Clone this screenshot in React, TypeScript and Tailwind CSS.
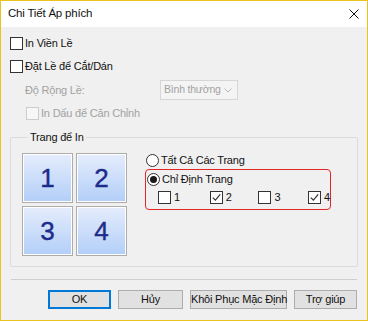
import React from 'react';

function CheckBox({ checked = false, disabled = false }: { checked?: boolean; disabled?: boolean }) {
  return (
    <span
      className={`w-[13px] h-[13px] shrink-0 border flex items-center justify-center ${
        disabled ? 'border-[#cccccc] bg-[#f7f7f7]' : 'border-[#333333] bg-white'
      }`}
    >
      {checked && (
        <svg width="9" height="9" viewBox="0 0 9 9">
          <path d="M0.8 4.6 L3.4 7.2 L8.2 1.4" fill="none" stroke="#333333" strokeWidth="1.2" />
        </svg>
      )}
    </span>
  );
}

function Radio({ checked = false }: { checked?: boolean }) {
  return (
    <span className="w-[13px] h-[13px] shrink-0 rounded-full border border-[#333333] bg-white flex items-center justify-center">
      {checked && <span className="w-[7px] h-[7px] rounded-full bg-[#1a1a1a]" />}
    </span>
  );
}

function Tile({ n }: { n: number }) {
  return (
    <div className="w-[51px] h-[50px] border border-[#acacac] p-px bg-white">
      <div className="w-full h-full bg-gradient-to-b from-[#e4ecfc] to-[#b3cff8] flex items-center justify-center">
        <span className="text-[26px] leading-none text-[#1d2c8a] [-webkit-text-stroke:0.4px_#1d2c8a]">{n}</span>
      </div>
    </div>
  );
}

function Btn({ label, primary = false, w }: { label: string; primary?: boolean; w: string }) {
  return (
    <button
      className={`h-[19px] ${w} bg-[#e1e1e1] text-[11px] leading-none text-[#111] whitespace-nowrap ${
        primary ? 'border-2 border-[#0078d7]' : 'border border-[#adadad]'
      }`}
    >
      {label}
    </button>
  );
}

export default function App() {
  return (
    <div
      className="w-[368px] h-[321px] border border-[#eac31e] bg-[#f0f0f0] flex flex-col text-[11px] tracking-[-0.2px] text-[#111] select-none whitespace-nowrap"
      style={{ fontFamily: '"Liberation Sans", Arial, sans-serif' }}
    >
      {/* title bar */}
      <div className="h-[26px] bg-white flex items-center justify-between pl-[7px] pr-[8px] shrink-0">
        <span className="text-[11.5px]">Chi Tiết Áp phích</span>
        <svg width="10" height="10" viewBox="0 0 10 10">
          <path d="M0.5 0.5 L9.5 9.5 M9.5 0.5 L0.5 9.5" stroke="#111" strokeWidth="1" />
        </svg>
      </div>

      <div className="flex-1 flex flex-col px-[9px]">
        <label className="mt-[10px] flex items-center gap-[2px] h-[13px]">
          <CheckBox />
          <span>In Viền Lề</span>
        </label>
        <label className="mt-[10px] flex items-center gap-[2px] h-[13px]">
          <CheckBox />
          <span>Đặt Lề để Cắt/Dán</span>
        </label>

        <div className="mt-[7px] flex items-center h-[20px] pl-[15px] text-[#a2a2a2]">
          <span className="w-[135px]">Độ Rộng Lề:</span>
          <div className="w-[78px] h-[20px] border border-[#d6d6d6] bg-[#f4f4f4] flex items-center justify-between pl-[3px] pr-[5px]">
            <span className="text-[10.5px]">Bình thường</span>
            <svg width="8" height="5" viewBox="0 0 8 5">
              <path d="M0.5 0.5 L4 4 L7.5 0.5" fill="none" stroke="#b4b4b4" strokeWidth="1" />
            </svg>
          </div>
        </div>

        <label className="mt-[7px] ml-[16px] flex items-center gap-[2px] h-[13px] text-[#a2a2a2]">
          <CheckBox disabled />
          <span>In Dấu để Căn Chỉnh</span>
        </label>

        <fieldset className="mt-[10px] border border-[#dcdcdc] rounded-[2px] pl-[11px] pr-[10px] pb-[10px] pt-[8px] flex">
          <legend className="ml-[6px] px-[2px] leading-[15px]">Trang để In</legend>
          <div className="flex gap-[18px]">
            <div className="grid grid-cols-[51px_51px] gap-[3px]">
              <Tile n={1} />
              <Tile n={2} />
              <Tile n={3} />
              <Tile n={4} />
            </div>
            <div className="flex flex-col">
              <label className="flex items-center gap-[2px] h-[14px] ml-[1px]">
                <Radio />
                <span>Tất Cả Các Trang</span>
              </label>
              <div className="mt-[2px] w-[186px] h-[41px] border-[1.5px] border-[#e32626] rounded-[4px] pl-[1px] pt-[2px] flex flex-col">
                <label className="flex items-center gap-[2px] h-[14px]">
                  <Radio checked />
                  <span>Chỉ Định Trang</span>
                </label>
                <div className="mt-[4px] pl-[11px] flex items-center h-[14px]">
                  <label className="flex items-center gap-[3px] w-[52px]">
                    <CheckBox />
                    <span>1</span>
                  </label>
                  <label className="flex items-center gap-[3px] w-[49px]">
                    <CheckBox checked />
                    <span>2</span>
                  </label>
                  <label className="flex items-center gap-[3px] w-[50px]">
                    <CheckBox />
                    <span>3</span>
                  </label>
                  <label className="flex items-center gap-[3px]">
                    <CheckBox checked />
                    <span>4</span>
                  </label>
                </div>
              </div>
            </div>
          </div>
        </fieldset>

        <div className="mt-[12px] border-t border-[#cfcfcf] mx-[1px]" />

        <div className="mt-[10px] flex justify-end gap-[7px] pr-[1px]">
          <Btn label="OK" primary w="w-[63px]" />
          <Btn label="Hủy" w="w-[65px]" />
          <Btn label="Khôi Phục Mặc Định" w="w-[97px]" />
          <Btn label="Trợ giúp" w="w-[63px]" />
        </div>
      </div>
    </div>
  );
}
